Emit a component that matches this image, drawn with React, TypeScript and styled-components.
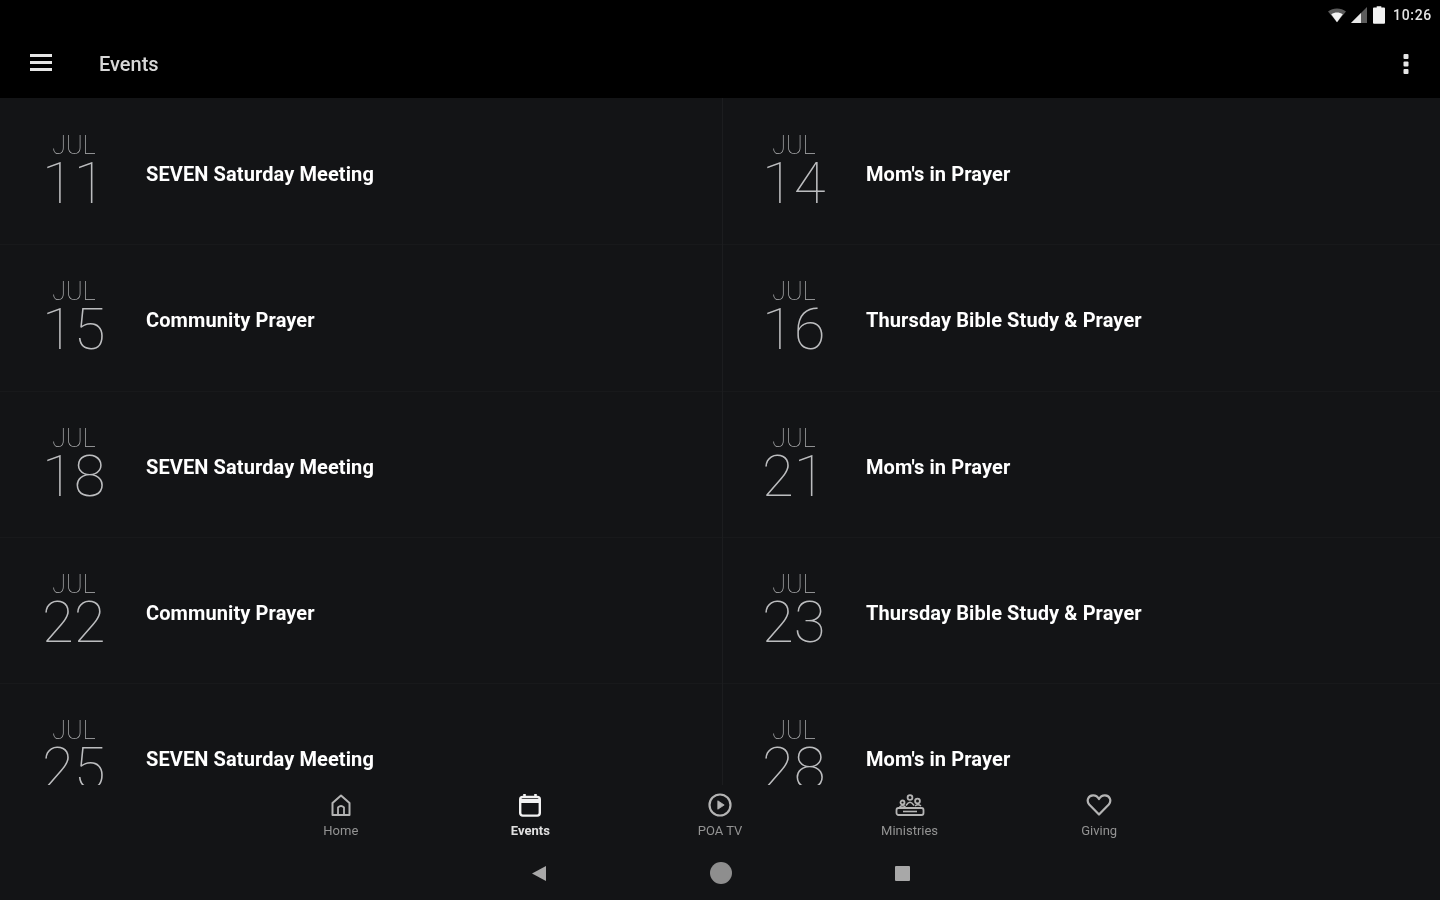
import React from 'react';
import styled, { createGlobalStyle } from 'styled-components';

const GlobalStyle = createGlobalStyle`
  html, body {
    margin: 0;
    padding: 0;
    height: 100%;
    background: #141517;
    font-family: Roboto, "Liberation Sans", sans-serif;
  }
`;

const Screen = styled.div`
  width: 1440px;
  height: 900px;
  display: flex;
  flex-direction: column;
  overflow: hidden;
  background: #131416;
  filter: blur(0.7px);
`;

const TopArea = styled.header`
  flex: none;
  height: 98px;
  background: #000;
  display: flex;
  flex-direction: column;
`;

const StatusBar = styled.div`
  height: 30px;
  display: flex;
  align-items: center;
  justify-content: flex-end;
  gap: 5px;
  padding-right: 8px;
  color: #e4e4e4;
  font-size: 14px;
  font-weight: 500;
`;

const Clock = styled.span`
  margin-left: 3px;
  letter-spacing: 0.7px;
`;

const Toolbar = styled.div`
  flex: 1;
  display: flex;
  align-items: center;
  padding: 0 31px 0 30px;
  margin-top: -1px;
  color: #e6e6e6;
`;

const ToolbarTitle = styled.h1`
  flex: 1;
  margin: 0 0 0 47px;
  font-size: 20px;
  font-weight: 500;
  color: #d8d8d8;
`;

const MenuSvg = styled.svg`
  margin-top: -3px;
`;

const Grid = styled.main`
  flex: 1;
  min-height: 0;
  overflow: hidden;
  display: grid;
  grid-template-columns: 720px 720px;
  grid-auto-rows: 146.25px;
  align-content: start;
  padding-top: 1px;
`;

const EventCell = styled.div<{ $right: boolean }>`
  position: relative;
  display: flex;
  padding: 33px 0 0 44px;
  box-sizing: border-box;
  border-bottom: 1px solid #18191b;

  ${({ $right }) =>
    $right &&
    `
    &::before {
      content: '';
      position: absolute;
      left: 2px;
      top: -1px;
      bottom: 0;
      width: 1px;
      background: #1c1d1f;
    }
  `}
`;

const DateBlock = styled.div`
  width: 60px;
  flex: none;
  display: flex;
  flex-direction: column;
`;

const Month = styled.span`
  align-self: center;
  font-size: 25px;
  line-height: 27px;
  font-weight: 100;
  color: #b4b5b7;
`;

const Day = styled.span`
  font-size: 58px;
  line-height: 50px;
  margin: -1px 0 0 -2px;
  font-weight: 100;
  color: #bcbdbf;
  white-space: nowrap;
`;

const EventTitle = styled.div`
  margin: 30px 0 0 42px;
  font-size: 20px;
  line-height: 24px;
  font-weight: 700;
  letter-spacing: 0.1px;
  color: #fff;
  white-space: nowrap;
`;

const BottomArea = styled.footer`
  flex: none;
  height: 115px;
  background: #131416;
  display: flex;
  flex-direction: column;
  align-items: center;
  position: relative;
  margin-top: -1px;
`;

const Tabs = styled.nav`
  width: 948px;
  height: 65px;
  display: grid;
  grid-template-columns: repeat(5, 1fr);
`;

const Tab = styled.div<{ $active?: boolean }>`
  display: flex;
  flex-direction: column;
  align-items: center;
  padding-top: 8px;
  gap: 7px;
  font-size: 13px;
  line-height: 14px;
  font-weight: ${({ $active }) => ($active ? 700 : 400)};
  color: ${({ $active }) => ($active ? '#e0e0e0' : '#939393')};

  svg {
    color: ${({ $active }) => ($active ? '#f2f2f2' : '#b4b4b4')};
  }
`;

const SystemNav = styled.div`
  width: 379px;
  display: flex;
  justify-content: space-between;
  align-items: center;
  height: 46px;
  color: #a8a8a8;
`;

const HomeDot = styled.span`
  width: 22px;
  height: 22px;
  border-radius: 50%;
  background: #8e8e8e;
`;

const StopSquare = styled.span`
  width: 15px;
  height: 15px;
  background: #a8a8a8;
  border-radius: 1px;
`;

const MenuIcon = () => (
  <MenuSvg width="22" height="17" viewBox="0 0 22 17" fill="currentColor">
    <rect y="0" width="22" height="3" />
    <rect y="7" width="22" height="3" />
    <rect y="14" width="22" height="3" />
  </MenuSvg>
);

const MoreIcon = () => (
  <svg width="6" height="20" viewBox="0 0 6 20" fill="currentColor">
    <rect x="0.5" y="0" width="5" height="5" rx="1" />
    <rect x="0.5" y="7.5" width="5" height="5" rx="1" />
    <rect x="0.5" y="15" width="5" height="5" rx="1" />
  </svg>
);

const WifiIcon = () => (
  <svg width="18" height="15" viewBox="0 0 20 16">
    <path d="M0 3.5 C5.5 -1 14.5 -1 20 3.5 L10 15.5 Z" fill="#5a5a5a" />
    <path d="M3.6 6.5 C7.5 4 12.5 4 16.4 6.5 L10 15.5 Z" fill="#f2f2f2" />
  </svg>
);

const SignalIcon = () => (
  <svg width="17" height="16" viewBox="0 0 17 16">
    <path d="M0 16 L16 0 L16 16 Z" fill="#5c5c5c" />
    <path d="M0 16 L10 6 L10 16 Z" fill="#e8e8e8" />
  </svg>
);

const BatteryIcon = () => (
  <svg width="12" height="18" viewBox="0 0 13 19" fill="#f2f2f2">
    <path d="M4 0 H9 V1.5 H12 Q13 1.5 13 2.5 V18 Q13 19 12 19 H1 Q0 19 0 18 V2.5 Q0 1.5 1 1.5 H4 Z" />
  </svg>
);

const TabHome = () => (
  <svg width="24" height="24" viewBox="0 0 24 24" fill="none" stroke="currentColor" strokeWidth="2">
    <path d="M3.5 22 V10 L12 2.5 L20.5 10 V22 Z" strokeLinejoin="round" />
    <path d="M9 22 V14.5 Q12 11.5 15 14.5 V22" strokeWidth="1.8" />
  </svg>
);

const TabCalendar = () => (
  <svg width="24" height="24" viewBox="0 0 24 24" fill="none" stroke="currentColor">
    <rect x="2.2" y="4" width="19.6" height="18.6" rx="2.5" strokeWidth="2.4" />
    <path d="M2.5 8 H21.5" strokeWidth="4" />
    <path d="M6.5 1 V5 M17.5 1 V5" strokeWidth="2.6" />
  </svg>
);

const TabPlay = () => (
  <svg width="24" height="24" viewBox="0 0 24 24" fill="none" stroke="currentColor">
    <circle cx="12" cy="12" r="10.5" strokeWidth="2.2" />
    <path d="M9.8 7.8 L16.2 12 L9.8 16.2 Z" fill="currentColor" strokeWidth="0.8" strokeLinejoin="round" />
  </svg>
);

const TabMinistries = () => (
  <svg width="30" height="24" viewBox="0 0 30 24" fill="none" stroke="currentColor" strokeWidth="1.8">
    <rect x="1.5" y="15" width="27" height="7" rx="2" />
    <path d="M8 18.5 H22" strokeWidth="1.6" />
    <circle cx="7.5" cy="9.5" r="2" />
    <circle cx="15" cy="4.5" r="2.4" />
    <circle cx="22.5" cy="8" r="2.4" />
    <path d="M4.5 14 Q7.5 11.5 10.5 14 M11 12.5 Q15 6 19 12.5 M20 13 Q23 10.5 26 13" strokeWidth="1.5" />
  </svg>
);

const TabHeart = () => (
  <svg width="26" height="24" viewBox="0 0 26 24" fill="none" stroke="currentColor" strokeWidth="2.2">
    <path d="M13 21.5 L3.2 11.5 C0.2 8 2 2.5 7 2.3 C9.8 2.2 11.8 3.8 13 6 C14.2 3.8 16.2 2.2 19 2.3 C24 2.5 25.8 8 22.8 11.5 Z" strokeLinejoin="round" />
  </svg>
);

const BackIcon = () => (
  <svg width="16" height="17" viewBox="0 0 16 17" fill="currentColor">
    <path d="M15 1 V16 L1 8.5 Z" />
  </svg>
);

const events = [
  { day: '11', title: 'SEVEN Saturday Meeting' },
  { day: '14', title: "Mom's in Prayer" },
  { day: '15', title: 'Community Prayer' },
  { day: '16', title: 'Thursday Bible Study & Prayer' },
  { day: '18', title: 'SEVEN Saturday Meeting' },
  { day: '21', title: "Mom's in Prayer" },
  { day: '22', title: 'Community Prayer' },
  { day: '23', title: 'Thursday Bible Study & Prayer' },
  { day: '25', title: 'SEVEN Saturday Meeting' },
  { day: '28', title: "Mom's in Prayer" },
];

const tabs = [
  { label: 'Home', icon: <TabHome /> },
  { label: 'Events', icon: <TabCalendar />, active: true },
  { label: 'POA TV', icon: <TabPlay /> },
  { label: 'Ministries', icon: <TabMinistries /> },
  { label: 'Giving', icon: <TabHeart /> },
];

const App: React.FC = () => (
  <Screen>
    <GlobalStyle />
    <TopArea>
      <StatusBar>
        <WifiIcon />
        <SignalIcon />
        <BatteryIcon />
        <Clock>10:26</Clock>
      </StatusBar>
      <Toolbar>
        <MenuIcon />
        <ToolbarTitle>Events</ToolbarTitle>
        <MoreIcon />
      </Toolbar>
    </TopArea>
    <Grid>
      {events.map((event, i) => (
        <EventCell key={i} $right={i % 2 === 1}>
          <DateBlock>
            <Month>JUL</Month>
            <Day>{event.day}</Day>
          </DateBlock>
          <EventTitle>{event.title}</EventTitle>
        </EventCell>
      ))}
    </Grid>
    <BottomArea>
      <Tabs>
        {tabs.map((tab) => (
          <Tab key={tab.label} $active={tab.active}>
            {tab.icon}
            {tab.label}
          </Tab>
        ))}
      </Tabs>
      <SystemNav>
        <BackIcon />
        <HomeDot />
        <StopSquare />
      </SystemNav>
    </BottomArea>
  </Screen>
);

export default App;
